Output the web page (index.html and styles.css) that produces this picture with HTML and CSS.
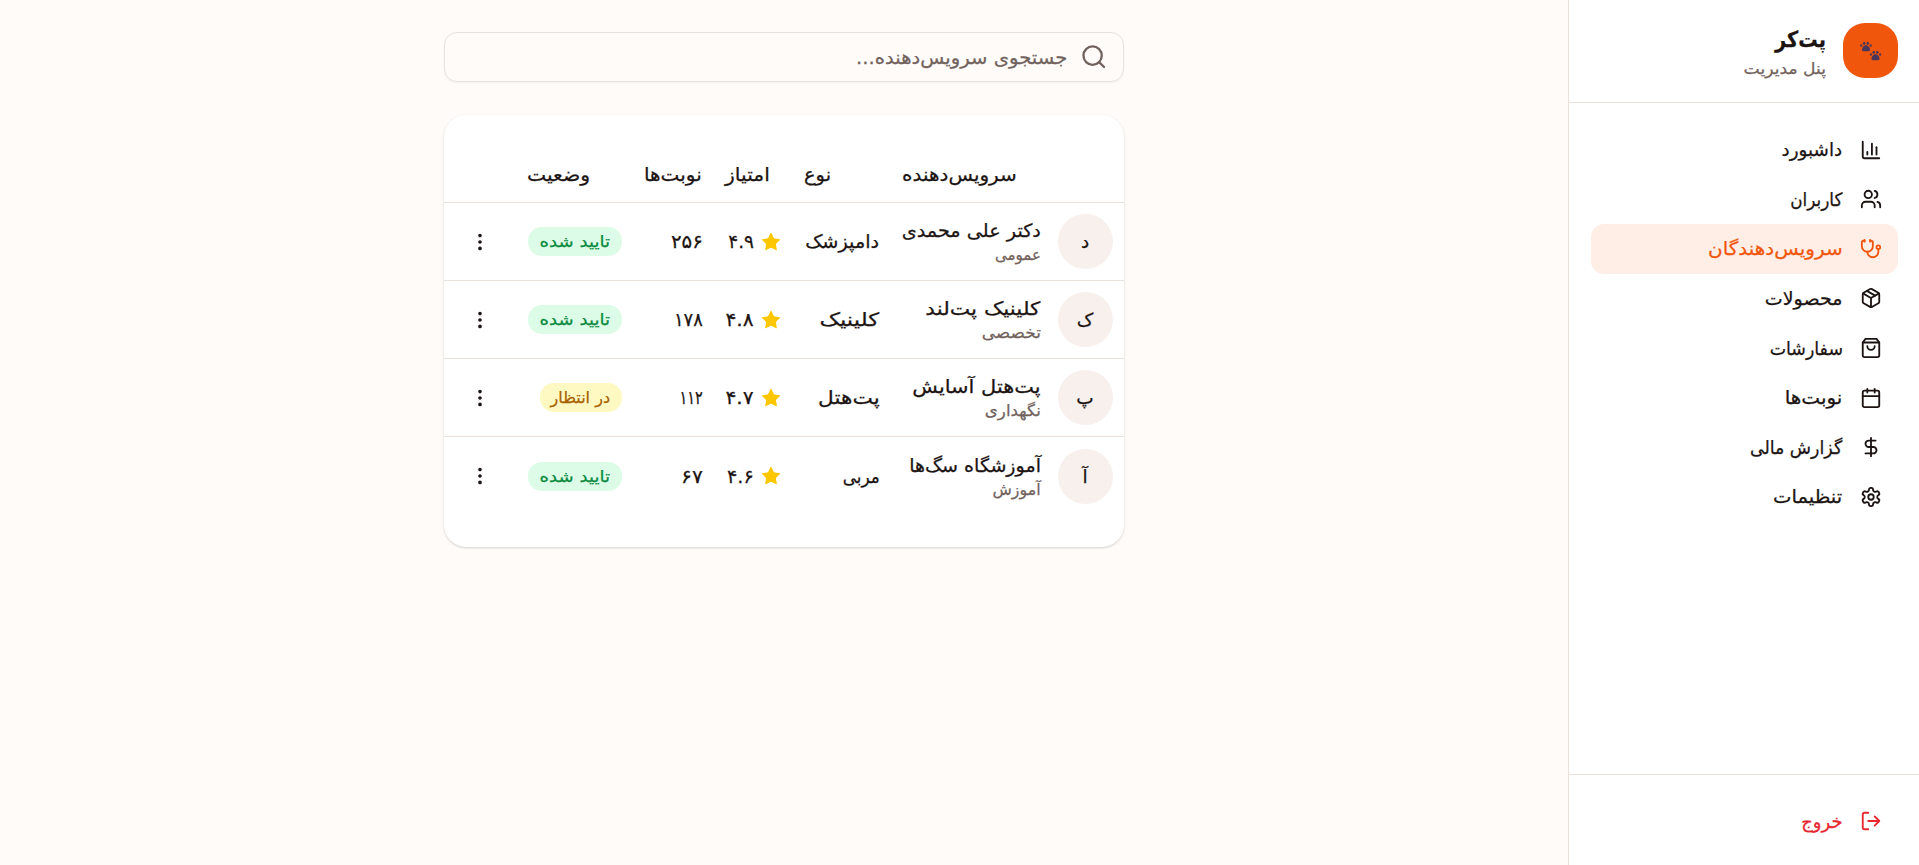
FILE: index.html
```html
<!DOCTYPE html>
<html lang="fa" dir="rtl">
<head>
<meta charset="utf-8">
<title>پت‌کر</title>
<link rel="stylesheet" href="styles.css">
</head>
<body>
<svg class="sprite" width="0" height="0">
  <symbol id="star" viewBox="0 0 24 24"><path d="M11.525 2.295a.53.53 0 0 1 .95 0l2.31 4.679a2.12 2.12 0 0 0 1.595 1.16l5.166.756a.53.53 0 0 1 .294.904l-3.736 3.638a2.12 2.12 0 0 0-.611 1.878l.882 5.14a.53.53 0 0 1-.771.56l-4.618-2.428a2.12 2.12 0 0 0-1.973 0L6.396 21.01a.53.53 0 0 1-.77-.56l.881-5.139a2.12 2.12 0 0 0-.611-1.879L2.16 9.795a.53.53 0 0 1 .294-.906l5.165-.755a2.12 2.12 0 0 0 1.597-1.16z"/></symbol>
  <symbol id="dots" viewBox="0 0 24 24"><circle cx="12" cy="12" r="1"/><circle cx="12" cy="5" r="1"/><circle cx="12" cy="19" r="1"/></symbol>
  <symbol id="paw" viewBox="0 0 12 10"><ellipse cx="1.3" cy="4" rx="1.1" ry="1.3"/><ellipse cx="4.2" cy="1.7" rx="1.2" ry="1.5"/><ellipse cx="7.8" cy="1.7" rx="1.2" ry="1.5"/><ellipse cx="10.7" cy="4" rx="1.1" ry="1.3"/><path d="M6 3.8C3.6 3.8 2 6.3 2 8.2c0 1.3.9 1.7 2 1.7h4c1.1 0 2-.4 2-1.7C10 6.3 8.4 3.8 6 3.8z"/></symbol>
</svg>
<div class="app">
  <aside class="sidebar">
    <header class="brand">
      <div class="logo"><svg class="paws" viewBox="0 0 22 22"><use href="#paw" x="0" y="1.5" width="12" height="10"/><use href="#paw" x="9.500" y="10.500" width="12" height="10"/></svg></div>
      <div class="brand-text"><span class="brand-name x88">پت‌کر</span><span class="brand-sub x107">پنل مدیریت</span></div>
    </header>
    <nav class="nav">
      <a class="item"><svg class="icon" viewBox="0 0 24 24"><path d="M3 3v16a2 2 0 0 0 2 2h16"/><path d="M18 17V9"/><path d="M13 17V5"/><path d="M8 17v-3"/></svg><span class="x99">داشبورد</span></a>
      <a class="item"><svg class="icon" viewBox="0 0 24 24"><path d="M16 21v-2a4 4 0 0 0-4-4H6a4 4 0 0 0-4 4v2"/><circle cx="9" cy="7" r="4"/><path d="M22 21v-2a4 4 0 0 0-3-3.87"/><path d="M16 3.13a4 4 0 0 1 0 7.75"/></svg><span class="x91">کاربران</span></a>
      <a class="item active"><svg class="icon" viewBox="0 0 24 24"><path d="M11 2v2"/><path d="M5 2v2"/><path d="M5 3H4a2 2 0 0 0-2 2v4a6 6 0 0 0 12 0V5a2 2 0 0 0-2-2h-1"/><path d="M8 15a6 6 0 0 0 12 0v-3"/><circle cx="20" cy="10" r="2"/></svg><span class="x108">سرویس‌دهندگان</span></a>
      <a class="item"><svg class="icon" viewBox="0 0 24 24"><path d="M11 21.73a2 2 0 0 0 2 0l7-4A2 2 0 0 0 21 16V8a2 2 0 0 0-1-1.73l-7-4a2 2 0 0 0-2 0l-7 4A2 2 0 0 0 3 8v8a2 2 0 0 0 1 1.73z"/><path d="M12 22V12"/><path d="M3.29 7 12 12l8.71-5"/><path d="m7.5 4.27 9 5.15"/></svg><span class="x103">محصولات</span></a>
      <a class="item"><svg class="icon" viewBox="0 0 24 24"><path d="M6 2 3 6v14a2 2 0 0 0 2 2h14a2 2 0 0 0 2-2V6l-3-4Z"/><path d="M3 6h18"/><path d="M16 10a4 4 0 0 1-8 0"/></svg><span class="x94">سفارشات</span></a>
      <a class="item"><svg class="icon" viewBox="0 0 24 24"><path d="M8 2v4"/><path d="M16 2v4"/><rect width="18" height="18" x="3" y="4" rx="2"/><path d="M3 10h18"/></svg><span class="x108">نوبت‌ها</span></a>
      <a class="item"><svg class="icon" viewBox="0 0 24 24"><path d="M12 2v20"/><path d="M17 5H9.5a3.5 3.5 0 0 0 0 7h5a3.5 3.5 0 0 1 0 7H6"/></svg><span class="x94">گزارش مالی</span></a>
      <a class="item"><svg class="icon" viewBox="0 0 24 24"><path d="M12.22 2h-.44a2 2 0 0 0-2 2v.18a2 2 0 0 1-1 1.73l-.43.25a2 2 0 0 1-2 0l-.15-.08a2 2 0 0 0-2.73.73l-.22.38a2 2 0 0 0 .73 2.73l.15.1a2 2 0 0 1 1 1.72v.51a2 2 0 0 1-1 1.74l-.15.09a2 2 0 0 0-.73 2.73l.22.38a2 2 0 0 0 2.73.73l.15-.08a2 2 0 0 1 2 0l.43.25a2 2 0 0 1 1 1.73V20a2 2 0 0 0 2 2h.44a2 2 0 0 0 2-2v-.18a2 2 0 0 1 1-1.73l.43-.25a2 2 0 0 1 2 0l.15.08a2 2 0 0 0 2.73-.73l.22-.39a2 2 0 0 0-.73-2.73l-.15-.08a2 2 0 0 1-1-1.74v-.5a2 2 0 0 1 1-1.74l.15-.09a2 2 0 0 0 .73-2.73l-.22-.38a2 2 0 0 0-2.73-.73l-.15.08a2 2 0 0 1-2 0l-.43-.25a2 2 0 0 1-1-1.73V4a2 2 0 0 0-2-2z"/><circle cx="12" cy="12" r="3"/></svg><span class="x106">تنظیمات</span></a>
    </nav>
    <footer class="foot">
      <a class="item logout"><svg class="icon" viewBox="0 0 24 24"><path d="M9 21H5a2 2 0 0 1-2-2V5a2 2 0 0 1 2-2h4"/><path d="m16 17 5-5-5-5"/><path d="M21 12H9"/></svg><span class="x97">خروج</span></a>
    </footer>
  </aside>
  <main class="main">
    <div class="search"><svg class="search-icon" viewBox="0 0 24 24"><circle cx="11" cy="11" r="8"/><path d="m21 21-4.340-4.340"/></svg><span class="x106">جستجوی سرویس‌دهنده...</span></div>
    <section class="card">
      <div class="row head"><div class="cell"><span class="x108">سرویس‌دهنده</span></div><div class="cell"><span class="x105">نوع</span></div><div class="cell"><span class="x110">امتیاز</span></div><div class="cell"><span class="x108">نوبت‌ها</span></div><div class="cell"><span class="x110">وضعیت</span></div><div class="cell"></div></div>
      <div class="row"><div class="cell who"><div class="avatar">د</div><div class="names"><span class="name x104">دکتر علی محمدی</span><span class="kind x94">عمومی</span></div></div><div class="cell"><span class="x104">دامپزشک</span></div><div class="cell score"><svg class="star"><use href="#star"/></svg><span>۴.۹</span></div><div class="cell"><span class="x107">۲۵۶</span></div><div class="cell"><div class="badge ok"><span class="x113">تایید شده</span></div></div><div class="cell more"><svg class="dots"><use href="#dots"/></svg></div></div>
      <div class="row"><div class="cell who"><div class="avatar">ک</div><div class="names"><span class="name x117">کلینیک پت‌لند</span><span class="kind x106">تخصصی</span></div></div><div class="cell"><span class="x124">کلینیک</span></div><div class="cell score"><svg class="star"><use href="#star"/></svg><span class="x110">۴.۸</span></div><div class="cell"><span class="x97">۱۷۸</span></div><div class="cell"><div class="badge ok"><span class="x113">تایید شده</span></div></div><div class="cell more"><svg class="dots"><use href="#dots"/></svg></div></div>
      <div class="row"><div class="cell who"><div class="avatar">پ</div><div class="names"><span class="name x113">پت‌هتل آسایش</span><span class="kind x104">نگهداری</span></div></div><div class="cell"><span class="x117">پت‌هتل</span></div><div class="cell score"><svg class="star"><use href="#star"/></svg><span class="x110">۴.۷</span></div><div class="cell"><span class="x78">۱۱۲</span></div><div class="cell"><div class="badge wait"><span>در انتظار</span></div></div><div class="cell more"><svg class="dots"><use href="#dots"/></svg></div></div>
      <div class="row"><div class="cell who"><div class="avatar">آ</div><div class="names"><span class="name x103">آموزشگاه سگ‌ها</span><span class="kind x99">آموزش</span></div></div><div class="cell"><span class="x91">مربی</span></div><div class="cell score"><svg class="star"><use href="#star"/></svg><span class="x104">۴.۶</span></div><div class="cell"><span class="x110">۶۷</span></div><div class="cell"><div class="badge ok"><span class="x113">تایید شده</span></div></div><div class="cell more"><svg class="dots"><use href="#dots"/></svg></div></div>
    </section>
  </main>
</div>
</body>
</html>
```
FILE: styles.css
```css
* { box-sizing: border-box; }
body { margin: 0; background: #fffbf8; color: #1c1412; font: 18.5px/27px "DejaVu Sans", sans-serif; }
span, .avatar { -webkit-text-stroke: .25px currentColor; }
span { display: block; white-space: nowrap; transform-origin: right center; }
.head span { transform-origin: left center; }

/* horizontal stretch of the labels */
.x78 { transform: scaleX(.78); }
.x88 { transform: scaleX(.88); }
.x91 { transform: scaleX(.91); }
.x94 { transform: scaleX(.94); }
.x97 { transform: scaleX(.97); }
.x99 { transform: scaleX(.99); }
.x103 { transform: scaleX(1.03); }
.x104 { transform: scaleX(1.04); }
.x105 { transform: scaleX(1.05); }
.x106 { transform: scaleX(1.06); }
.x107 { transform: scaleX(1.07); }
.x108 { transform: scaleX(1.08); }
.x110 { transform: scaleX(1.1); }
.x113 { transform: scaleX(1.13); }
.x117 { transform: scaleX(1.17); }
.x124 { transform: scaleX(1.24); }

.sprite { position: absolute; }
.app { display: flex; height: 865px; overflow: hidden; }
.sidebar { display: flex; flex-direction: column; width: 351px; background: #fff; border-left: 1px solid #e8e1dc; }
.brand { display: flex; gap: 17px; height: 103px; padding: 23px 21px 0 0; border-bottom: 1px solid #e8e1dc; }
.logo { display: flex; align-items: center; justify-content: center; width: 55px; height: 55px; border-radius: 22px; background: #f0560c; }
.paws { width: 22px; height: 22px; fill: #48365b; }
.brand-text { display: flex; flex-direction: column; align-items: flex-start; }
.brand-name { font-size: 22px; font-weight: 700; line-height: 33px; }
.brand-sub { font-size: 16px; line-height: 26px; color: #71625d; }
.nav { flex: 1; padding: 22px 21px 0 22px; }
.item { display: flex; align-items: center; gap: 17px; height: 49.57px; padding-right: 16.5px; border-radius: 13px; }
.icon { width: 22px; height: 22px; flex: none; fill: none; stroke: currentColor; stroke-width: 2; stroke-linecap: round; stroke-linejoin: round; }
.active { background: #feeee6; color: #f0560c; }
.foot { height: 91px; padding: 21.5px 21px 0 22px; border-top: 1px solid #e8e1dc; }
.logout { color: #e7262f; }
.main { flex: 1; display: flex; flex-direction: column; align-items: center; gap: 33px; padding-top: 32px; }
.search { display: flex; align-items: center; gap: 12px; width: 680px; height: 50px; padding-right: 16px; border: 1px solid #e8e1dc; border-radius: 13px; color: #71625d; box-shadow: 0 1px 2px rgba(0,0,0,.05); }
.search-icon { width: 27.5px; height: 27.5px; fill: none; stroke: currentColor; stroke-width: 2; stroke-linecap: round; }
.card { width: 680px; height: 432px; padding-top: 33px; border-radius: 22px; background: #fff; box-shadow: 0 1px 3px rgba(0,0,0,.1), 0 1px 2px rgba(0,0,0,.08); }
.row { display: grid; grid-template-columns: 233px 98px 79px 81px 117px 72px; height: 78px; border-bottom: 1px solid #e8e1dc; }
.row:last-child { border-bottom: 0; }
.cell { display: flex; align-items: center; padding: 0 11.5px 0 11px; white-space: nowrap; }
.head { height: 55px; }
.head .cell { justify-content: flex-end; padding-bottom: 2px; }
.who { gap: 17px; }
.avatar { display: flex; align-items: center; justify-content: center; flex: none; width: 55px; height: 55px; border-radius: 50%; background: #f7f0ec; }
.names { display: flex; flex-direction: column; align-items: flex-start; }
.kind { font-size: 16px; line-height: 22px; color: #71625d; }
.score { gap: 5.5px; }
.star { width: 22px; height: 22px; flex: none; fill: #fdc700; }
.badge { width: 94px; height: 29px; padding: 0 11.5px; border-radius: 14px; font-size: 16px; line-height: 29px; }
.ok { background: #dcfce7; color: #0b8a40; }
.wait { width: 82px; background: #fef9c2; color: #a65f00; }
.more { justify-content: center; }
.dots { width: 22px; height: 22px; fill: currentColor; stroke: currentColor; stroke-width: 2; }
```
